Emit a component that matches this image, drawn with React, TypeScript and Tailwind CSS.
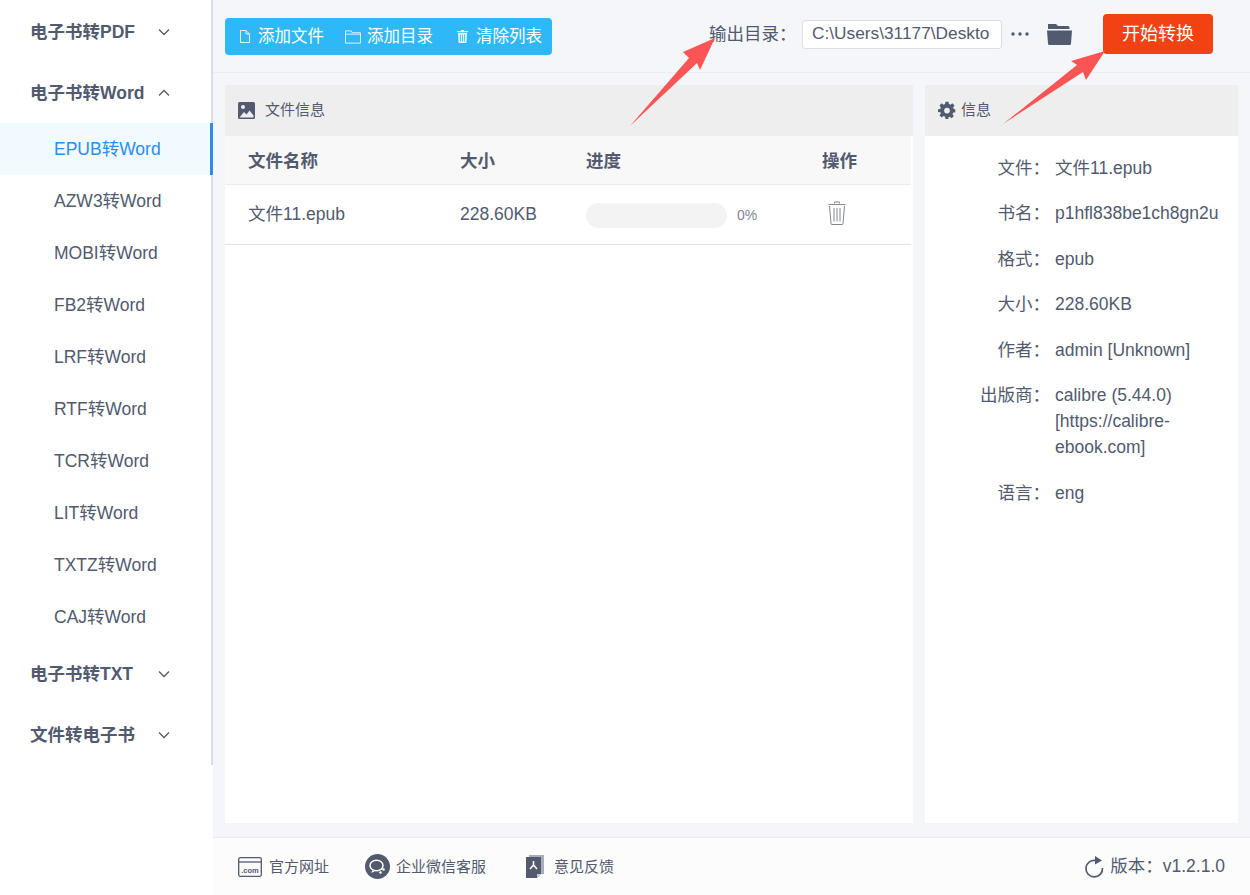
import React from "react";

const FONT = "[font-family:'Liberation_Sans','Noto_Sans_CJK_SC',sans-serif]";

function Chevron({ up }: { up?: boolean }) {
  return (
    <svg width="12" height="8" viewBox="0 0 12 8" fill="none" stroke="#515a6e" strokeWidth="1.3" className="absolute left-[158px] top-1/2 -translate-y-1/2">
      <path d={up ? "M1 6.5 L6 1.5 L11 6.5" : "M1 1.5 L6 6.5 L11 1.5"} />
    </svg>
  );
}

function Group({ label, up }: { label: string; up?: boolean }) {
  return (
    <div className="relative h-[61px] flex items-center pl-[30px] pt-[2px] text-[17.5px] font-bold text-[#515a6e]">
      <span>{label}</span>
      <Chevron up={up} />
    </div>
  );
}

const items = ["AZW3转Word", "MOBI转Word", "FB2转Word", "LRF转Word", "RTF转Word", "TCR转Word", "LIT转Word", "TXTZ转Word", "CAJ转Word"];

function Sidebar() {
  return (
    <aside className="w-[213px] shrink-0 bg-white">
      <div className="h-[765px] pt-px border-r-2 border-[#dcdee6]">
        <Group label="电子书转PDF" />
        <Group label="电子书转Word" up />
        <div className="relative h-[52px] mr-[-2px] flex items-center pl-[54px] text-[17.5px] text-[#2d8cf0] bg-[#f0faff] border-r-[3px] border-[#2d8cf0]">EPUB转Word</div>
        {items.map((t) => (
          <div key={t} className="h-[52px] flex items-center pl-[54px] text-[17.5px] text-[#515a6e]">{t}</div>
        ))}
        <Group label="电子书转TXT" />
        <Group label="文件转电子书" />
      </div>
    </aside>
  );
}

function TopBar() {
  return (
    <header className="h-[73px] shrink-0 flex items-center border-b border-[#ebedf2] pl-3 pr-[37px]">
      <div className="h-[37px] w-[327px] rounded-[4px] bg-[#2fb8f8] flex items-center pl-[15px] mt-[1px] text-[16.500px] text-white">
        <svg width="10" height="13" viewBox="0 0 10 13" fill="none" stroke="#e4f6ff" strokeWidth="1">
          <path d="M.5.5h5.5L9.5 4v8.5H.5z M6 .5V4h3.5" />
        </svg>
        <span className="ml-2">添加文件</span>
        <svg width="16" height="14" viewBox="0 0 17 14" fill="none" stroke="#e4f6ff" strokeWidth="1" className="ml-[21px]">
          <path d="M.5 13.500V.5h6l1 2h9v11z M.5 4h16" />
        </svg>
        <span className="ml-[6px]">添加目录</span>
        <svg width="11" height="13" viewBox="0 0 11 13" fill="#e4f6ff" className="ml-6">
          <path d="M4 0h3v1h4v1.200H0V1h4zM1 3h9l-.6 10H1.600zM3 4.500v7h.8v-7zM5.100 4.500v7h.8v-7zM7.200 4.500v7h.8v-7z" />
        </svg>
        <span className="ml-2">清除列表</span>
      </div>
      <div className="ml-auto flex items-center mb-1">
        <span className="text-[17.5px] text-[#515a6e]">输出目录{"\uFF1A"}</span>
        <div className="ml-[5.500px] w-[200px] h-[29px] rounded-[3px] border border-[#dcdee2] bg-white flex items-center pl-[9px] text-[17.300px] text-[#515a6e] overflow-hidden whitespace-nowrap">C:\Users\31177\Deskto</div>
        <svg width="18" height="4" viewBox="0 0 18 4" fill="#515a6e" className="ml-[9px]">
          <circle cx="2" cy="2" r="1.700" />
          <circle cx="9" cy="2" r="1.700" />
          <circle cx="16" cy="2" r="1.700" />
        </svg>
        <svg width="25" height="21" viewBox="0 0 25 21" fill="#515a6e" className="ml-[18px]">
          <path d="M1 0h8l2 2h10a1.500 1.500 0 0 1 1.500 1.500V5H1z" />
          <path d="M0 6.500h25L24 19.500a1.500 1.500 0 0 1-1.500 1.500H2.500A1.500 1.500 0 0 1 1 19.500z" />
        </svg>
        <button className="ml-[31px] w-[110px] h-[40px] rounded-[4px] bg-[#f24112] text-white text-[18px]">开始转换</button>
      </div>
    </header>
  );
}

function FilePanel() {
  return (
    <section className="flex-1 bg-white">
      <div className="h-[51px] bg-[#eeeeee] flex items-center pl-[13px] pb-[1px] gap-[10px] text-[15px] text-[#515a6e]">
        <svg width="17" height="17" viewBox="0 0 17 17">
          <rect width="17" height="17" rx="1.500" fill="#515a6e" />
          <circle cx="5" cy="5" r="2" fill="#eeeeee" />
          <path d="M1.500 15.500 L6 10 L8.500 12.500 L11.500 8.500 L15.500 13.500 V15.500 Z" fill="#eeeeee" />
        </svg>
        <span>文件信息</span>
      </div>
      <div className="mr-[2px]">
        <div className="h-[49px] pt-[3px] bg-[#f8f8f9] border-b border-[#e8eaec] grid grid-cols-[212px_126px_236px_1fr] items-center pl-[23px] text-[17.5px] font-bold text-[#515a6e]">
          <span>文件名称</span>
          <span>大小</span>
          <span>进度</span>
          <span>操作</span>
        </div>
        <div className="h-[60px] border-b border-[#e0e2e6] grid grid-cols-[212px_126px_236px_1fr] items-center pl-[23px] text-[17.5px] text-[#515a6e]">
          <span>文件11.epub</span>
          <span>228.60KB</span>
          <div className="flex items-center mt-[1px]">
            <div className="w-[141px] h-[25px] rounded-full bg-[#f3f3f3]" />
            <span className="ml-[10px] text-[14px] text-[#808695]">0%</span>
          </div>
          <svg width="18" height="24" viewBox="0 0 18 24" fill="none" stroke="#808695" strokeWidth="1" className="ml-[6px] mb-[3px]">
            <path d="M6.500 2.500 V1 h5 v1.500 M.5 3.500 h17 M1.500 5 L3 22.500 a1 1 0 0 0 1 1 h10 a1 1 0 0 0 1-1 L16.500 5 M6 7 V20.500 M9 7 V20.500 M12 7 V20.500" />
          </svg>
        </div>
      </div>
    </section>
  );
}

const infos: [string, string[]][] = [
  ["文件\uFF1A", ["文件11.epub"]],
  ["书名\uFF1A", ["p1hfl838be1ch8gn2u"]],
  ["格式\uFF1A", ["epub"]],
  ["大小\uFF1A", ["228.60KB"]],
  ["作者\uFF1A", ["admin [Unknown]"]],
  ["出版商\uFF1A", ["calibre (5.44.0)", "[https://calibre-", "ebook.com]"]],
  ["语言\uFF1A", ["eng"]],
];

function InfoPanel() {
  return (
    <section className="w-[313px] shrink-0 bg-white">
      <div className="h-[51px] bg-[#eeeeee] flex items-center pl-[13px] pb-[1px] gap-[5px] text-[15px] text-[#515a6e]">
        <svg width="18" height="18" viewBox="0 0 24 24" fill="#515a6e" fillRule="evenodd">
          <path d="M10 1h4l.6 3.100 2 .8 2.600-1.800 2.800 2.800-1.800 2.600.8 2L23 11v4l-2.900.5-.8 2 1.800 2.600-2.800 2.800-2.600-1.800-2 .8L14 24h-4l-.6-3.100-2-.8-2.600 1.800-2.800-2.800 1.800-2.600-.8-2L0 15v-4l3-.5.8-2L2 5.900l2.800-2.800 2.600 1.800 2-.8zM12 9a3.800 3.800 0 1 0 0 7.600A3.800 3.800 0 0 0 12 9z" />
        </svg>
        <span>信息</span>
      </div>
      <div className="pt-[18.500px] pr-5 flex flex-col gap-[19.5px]">
        {infos.map(([k, v]) => (
          <div key={k} className="flex text-[17.5px] leading-[26px] text-[#515a6e]">
            <span className="w-[125px] shrink-0 text-right">{k}</span>
            <div className="ml-[5px] overflow-hidden whitespace-nowrap">
              {v.map((l) => (
                <div key={l}>{l}</div>
              ))}
            </div>
          </div>
        ))}
      </div>
    </section>
  );
}

function Footer() {
  return (
    <footer className="h-[58px] shrink-0 border-t border-[#e8eaec] bg-[#fcfcfd] flex items-center px-[25px] text-[15px] text-[#515a6e]">
      <svg width="24" height="20" viewBox="0 0 24 20" fill="none" stroke="#515a6e" strokeWidth="1.300" className="mr-[7px]">
        <rect x=".7" y=".7" width="22.600" height="18.600" rx="1.500" />
        <path d="M1 5h22" />
        <text x="12" y="15.500" fontSize="7.500" textAnchor="middle" fill="#515a6e" stroke="none" fontWeight="bold">.com</text>
      </svg>
      <span className="pt-[2px]">官方网址</span>
      <svg width="25" height="25" viewBox="0 0 25 25" className="ml-[36px] mr-[6px]">
        <circle cx="12.500" cy="12.500" r="12.500" fill="#515a6e" />
        <ellipse cx="11.500" cy="11.500" rx="6.500" ry="5.300" fill="none" stroke="#fff" strokeWidth="1.500" />
        <path d="M7 16.500 L6.500 19 L10 17" fill="#fff" />
        <circle cx="18.500" cy="15.500" r="1.300" fill="#fff" />
        <circle cx="15.500" cy="18.500" r="1.300" fill="#fff" />
      </svg>
      <span className="pt-[2px]">企业微信客服</span>
      <svg width="18" height="23" viewBox="0 0 18 23" className="ml-[40px] mr-[10px]">
        <rect x="3" y="0" width="15" height="19" fill="#a9adb8" />
        <path d="M0 2h15v17l-4 4H0z" fill="#515a6e" />
        <path d="M11 23v-4h4z" fill="#c8cbd3" />
        <path d="M7.500 6v4M7.500 10L4 14M7.500 10L11 14" stroke="#fff" strokeWidth="1.500" fill="none" />
      </svg>
      <span className="pt-[2px]">意见反馈</span>
      <div className="ml-auto flex items-center text-[17.5px]">
        <svg width="20" height="22" viewBox="0 0 20 22" fill="none" className="mr-[6px]">
          <path d="M12 4.500 A8.300 8.300 0 1 0 18.500 12" stroke="#515a6e" strokeWidth="1.700" />
          <path d="M11 0 L18 4.500 L11 8.500 Z" fill="#515a6e" />
        </svg>
        <span>版本{"\uFF1A"}v1.2.1.0</span>
      </div>
    </footer>
  );
}

export default function App() {
  return (
    <div className={`relative h-[895px] w-full flex overflow-hidden bg-white ${FONT}`}>
      <Sidebar />
      <main className="flex-1 min-w-0 flex flex-col bg-[#f5f6f9]">
        <TopBar />
        <div className="flex-1 min-h-0 flex gap-3 pt-3 pb-[14px] px-3">
          <FilePanel />
          <InfoPanel />
        </div>
        <Footer />
      </main>
      <svg width="1250" height="895" className="absolute left-0 top-0 pointer-events-none" viewBox="0 0 1250 895">
        <path d="M630 126 L689 58 L683 52 L715 38 L700 70 L697 63 Z" fill="#fb5454" />
        <path d="M1003 124 L1077 65 L1071 61 L1105 51 L1086 80 L1083 72 Z" fill="#fb5454" />
      </svg>
    </div>
  );
}
